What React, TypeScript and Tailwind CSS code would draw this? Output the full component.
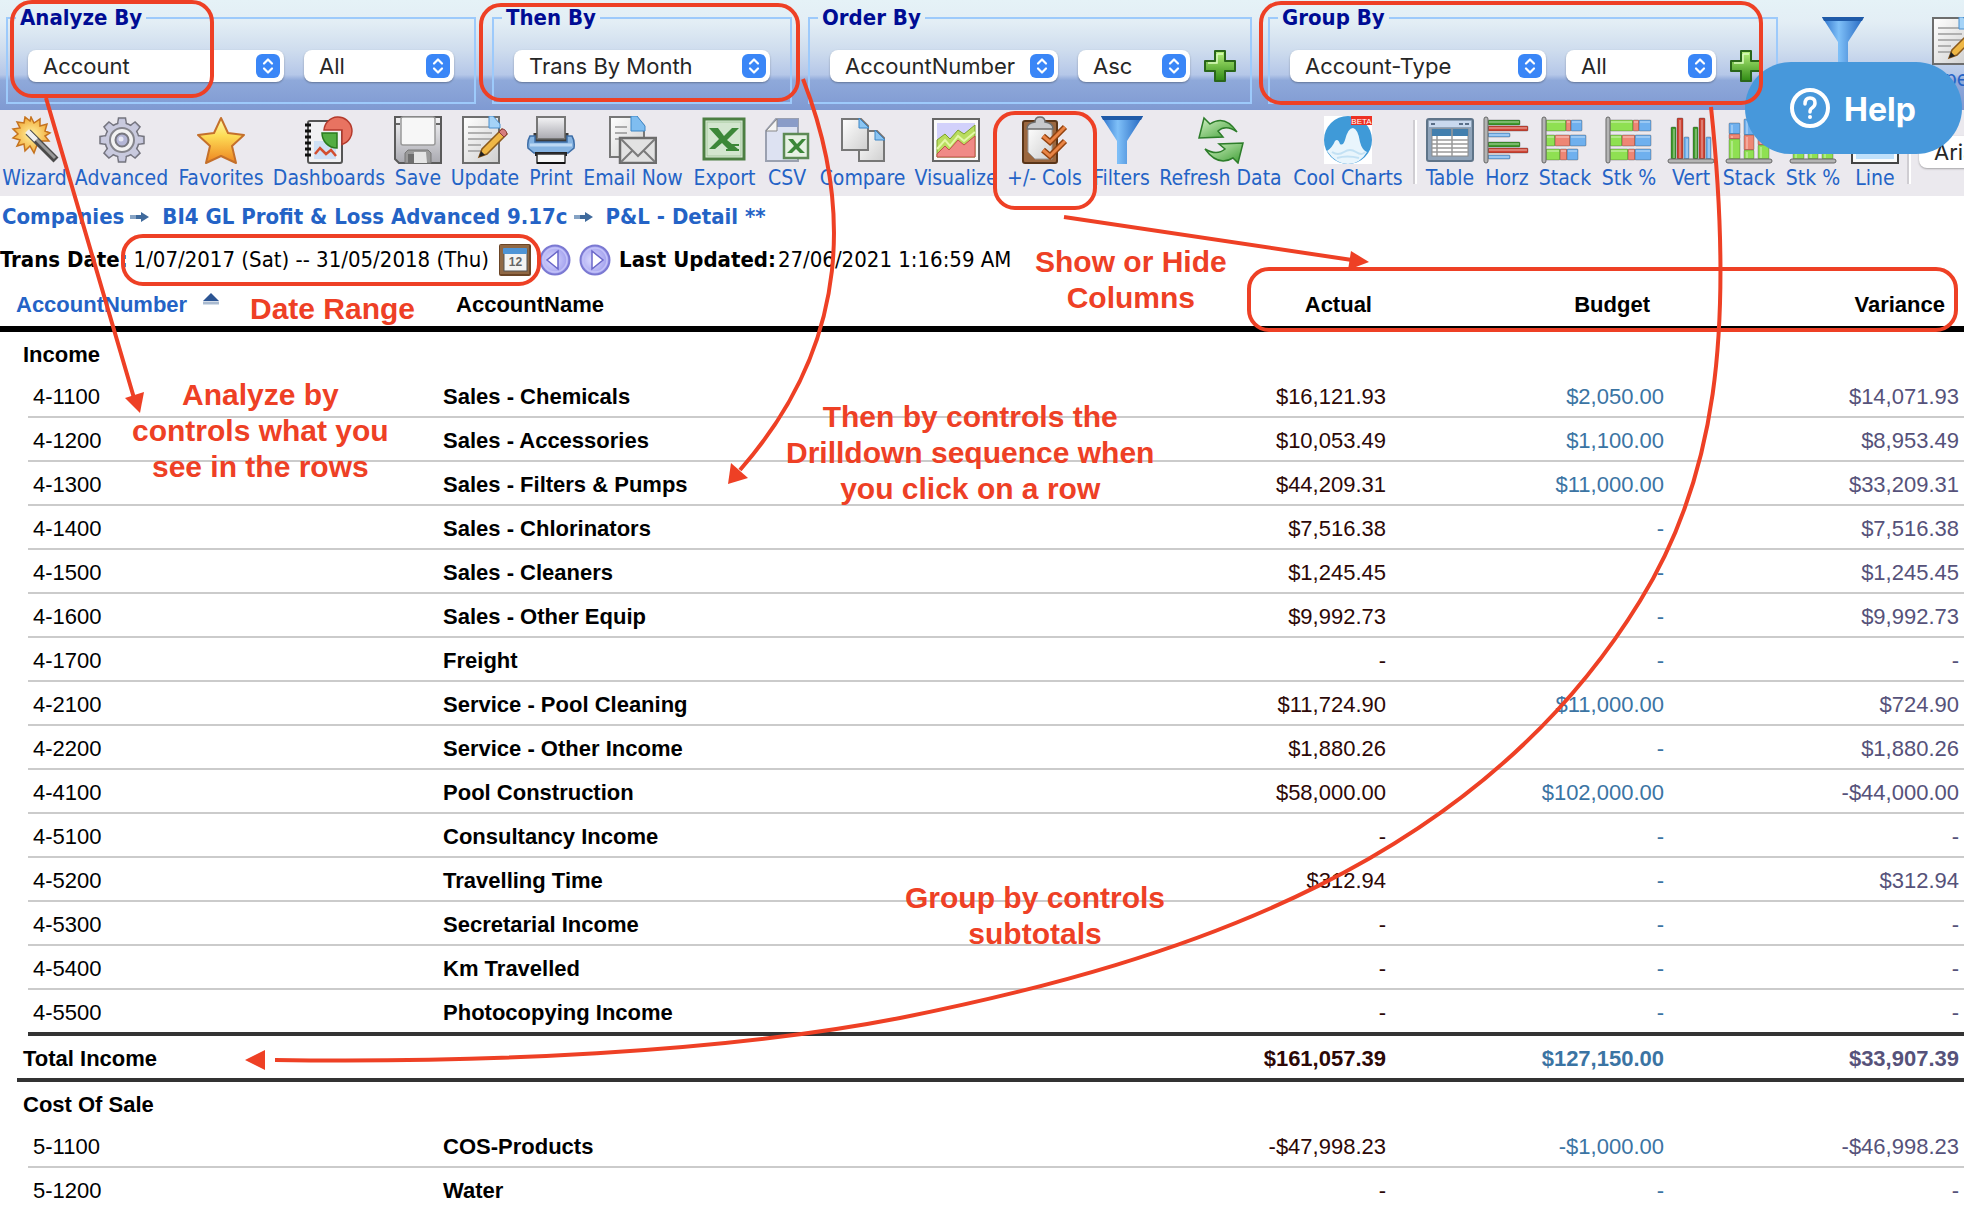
import React from "react";

const tahoma = "font-['DejaVu_Sans_Condensed','Noto_Sans',sans-serif]";

/* ---------- icons ---------- */

function Gradients() {
  return (
    <svg className="absolute size-0" aria-hidden="true">
      <defs>
        <linearGradient id="gold" x1="0" y1="0" x2="0" y2="1">
          <stop offset="0" stopColor="#fffbb0" />
          <stop offset="0.4" stopColor="#fddc55" />
          <stop offset="1" stopColor="#ee8420" />
        </linearGradient>
        <radialGradient id="burst">
          <stop offset="0" stopColor="#fff3a0" />
          <stop offset="1" stopColor="#f2ac3c" />
        </radialGradient>
        <linearGradient id="steel" x1="0" y1="0" x2="0" y2="1">
          <stop offset="0" stopColor="#f4f4f6" />
          <stop offset="1" stopColor="#a9a9b0" />
        </linearGradient>
        <linearGradient id="paper" x1="0" y1="0" x2="1" y2="1">
          <stop offset="0" stopColor="#ffffff" />
          <stop offset="1" stopColor="#cfcfcf" />
        </linearGradient>
        <linearGradient id="plus" x1="0" y1="0" x2="0" y2="1">
          <stop offset="0" stopColor="#b6f07c" />
          <stop offset="1" stopColor="#2f8a14" />
        </linearGradient>
        <linearGradient id="funnel" x1="0" y1="0" x2="1" y2="0">
          <stop offset="0" stopColor="#2a6fc9" />
          <stop offset="0.4" stopColor="#7fc0f8" />
          <stop offset="1" stopColor="#2265bf" />
        </linearGradient>
        <linearGradient id="leaf" x1="0" y1="0" x2="1" y2="1">
          <stop offset="0" stopColor="#d4f2c6" />
          <stop offset="1" stopColor="#3d9e33" />
        </linearGradient>
        <radialGradient id="orb" cx="0.4" cy="0.5" r="0.6">
          <stop offset="0" stopColor="#dcdcff" />
          <stop offset="1" stopColor="#9a98ec" />
        </radialGradient>
      </defs>
    </svg>
  );
}

function Icon({ children }: { children: React.ReactNode }) {
  return (
    <svg className="size-12 shrink-0" viewBox="0 0 48 48" aria-hidden="true">
      {children}
    </svg>
  );
}

function WizardIcon() {
  return (
    <Icon>
      <path
        d="M20 1l3 6 6-4 0 7 7-2-2 7 5 2-5 3 4 5-7 0 1 7-6-3-3 8-4-7-5 5-1-7-7 2 3-6-7-2 5-4-5-5 7-1-3-6 7 1 1-6 5 4z"
        fill="url(#burst)"
        stroke="#c5731f"
        strokeWidth="1.5"
      />
      <path d="M17 16l28 28" stroke="#4a4a4a" strokeWidth="7" />
      <path d="M17 15l27 27" stroke="#999" strokeWidth="3" />
      <path d="M16 15l9 9" stroke="#f0f0f0" strokeWidth="5" />
    </Icon>
  );
}

const teeth = [0, 45, 90, 135, 180, 225, 270, 315];

function GearIcon() {
  return (
    <Icon>
      {teeth.map((a) => (
        <path key={a} d="M19.500 9l1-7h7l1 7z" fill="#c3c4dc" stroke="#74747e" strokeWidth="1.500" transform={`rotate(${a} 24 24)`} />
      ))}
      <circle cx="24" cy="24" r="17" fill="#c9cade" stroke="#74747e" strokeWidth="1.500" />
      {teeth.map((a) => (
        <path key={a} d="M20 11l1-7h6l1 7z" fill="#c9cade" transform={`rotate(${a} 24 24)`} />
      ))}
      <circle cx="24" cy="24" r="12" fill="#f2f2f2" stroke="#85858c" strokeWidth="2" />
      <circle cx="24" cy="24" r="6.500" fill="#b4b6d6" stroke="#77777f" strokeWidth="2" />
      <circle cx="23" cy="23" r="2.500" fill="#e6e7f4" />
    </Icon>
  );
}

function StarIcon() {
  return (
    <Icon>
      <path
        d="M24 2l7 15 16 2-12 11 4 17-15-7-15 7 4-17L1 19l16-2z"
        fill="url(#gold)"
        stroke="#c4702b"
        strokeWidth="2"
        strokeLinejoin="round"
      />
    </Icon>
  );
}

function DashboardIcon() {
  return (
    <Icon>
      <rect x="3" y="5" width="34" height="42" rx="2" fill="#f1f1f3" stroke="#555" strokeWidth="2" />
      <rect x="9" y="25" width="22" height="18" fill="#cfe0f5" />
      <path d="M10 38l5-6 6 6 5-4 5 6" fill="none" stroke="#d34e2f" strokeWidth="2.500" />
      {[9, 15, 21, 27, 33, 39].map((y) => (
        <path key={y} d={`M0 ${y}h6`} stroke="#111" strokeWidth="3" />
      ))}
      <path d="M19 14a14 14 0 1 1 18 14.500V14z" fill="#e87361" stroke="#b43a2c" strokeWidth="1.500" />
      <path d="M17 17h15v15a15 15 0 0 1-15-15z" fill="#54ad42" stroke="#2b7a1e" strokeWidth="1.500" />
    </Icon>
  );
}

function SaveIcon() {
  return (
    <Icon>
      <path d="M1 1h46v46H5l-4-4z" fill="url(#steel)" stroke="#5a5a5a" strokeWidth="2" />
      <rect x="7" y="1" width="34" height="28" rx="2" fill="#f7f7f7" stroke="#999" strokeWidth="1.500" />
      <path d="M2 8h4M42 8h4" stroke="#666" strokeWidth="2" />
      <path d="M11 47V37l3-3h20l3 3v10z" fill="#9a9a9a" stroke="#777" />
      <path d="M19 47l1-11h12l1 11z" fill="#e5e5e5" />
      <rect x="14" y="38" width="6" height="9" fill="#6f6f6f" />
    </Icon>
  );
}

function NoteIcon() {
  return (
    <Icon>
      <rect x="2" y="1" width="36" height="46" fill="url(#paper)" stroke="#6d6d6d" strokeWidth="2" />
      {[11, 17, 23, 29, 35].map((y, i) => (
        <path key={y} d={`M7 ${y}h${i > 2 ? 13 : 24}`} stroke="#b0b0b0" strokeWidth="2" />
      ))}
      <path d="M28 0h4l7 8v4H28z" fill="#a5d3f7" stroke="#4a90cf" strokeWidth="1" />
      <path d="M18 41l3-8 20-20 5 5-20 20z" fill="#efb745" stroke="#8b5a1c" strokeWidth="1.500" />
      <path d="M38 16l3-3q4 0 5 5l-3 3z" fill="#d67d7d" stroke="#8c3a3a" strokeWidth="1" />
      <path d="M18 41l2-6 4 4z" fill="#222" />
    </Icon>
  );
}

function PrintIcon() {
  return (
    <Icon>
      <path d="M10 1h28v22H10z" fill="url(#steel)" stroke="#777" strokeWidth="2" />
      <path d="M8 17v8h32v-8" fill="none" stroke="#3c3c3c" strokeWidth="3" />
      <path d="M3 20h5v6h32v-6h5q3 5 2 12l-6 5H7l-6-5q-1-7 2-12z" fill="#86b4e2" stroke="#3f6fa8" strokeWidth="1.500" />
      <path d="M3 29h42" stroke="#bcd8f3" strokeWidth="3" />
      <path d="M8 36h32v4H8z" fill="#222" />
      <path d="M10 38h28v9H10z" fill="#f6f6f6" stroke="#333" strokeWidth="1.500" />
      <path d="M10 47h28" stroke="#111" strokeWidth="2" />
    </Icon>
  );
}

function EmailIcon() {
  return (
    <Icon>
      <path d="M1 1h26l8 9v31H1z" fill="url(#paper)" stroke="#777" strokeWidth="2" />
      <path d="M6 11h12M6 17h12M6 23h8" stroke="#aaa" strokeWidth="2" />
      <path d="M22 0h6l8 10v5H22z" fill="#7fbdf0" stroke="#3d86c6" />
      <rect x="11" y="22" width="36" height="25" fill="#e2e2e2" stroke="#6c6c6c" strokeWidth="2.500" />
      <path d="M12 23l17 17 17-17M12 46l12-12M46 46L34 34" fill="none" stroke="#7b7b7b" strokeWidth="2" />
    </Icon>
  );
}

function ExportIcon() {
  return (
    <Icon>
      <rect x="3" y="3" width="40" height="40" fill="#dfeedd" stroke="#4c7f42" strokeWidth="3" />
      <rect x="6" y="6" width="34" height="34" fill="#d3e6cf" stroke="#a7c9a0" />
      <path d="M8 12h9l6 8 8-8h7L26 24l11 9H27l-6-6-7 6H8l10-10z" fill="#3c8738" />
      <path d="M25 34h13M31 29h7" stroke="#3c8738" strokeWidth="2" />
    </Icon>
  );
}

function CsvIcon() {
  return (
    <Icon>
      <path d="M3 15L13 3h22v42H3z" fill="#dde2f2" stroke="#9aa0b0" strokeWidth="2" />
      <path d="M14 3h21v8H14z" fill="#8a9cc8" />
      <path d="M3 15l11-12v12z" fill="#f4f4f4" stroke="#888" />
      <rect x="21" y="18" width="24" height="24" fill="#e6f1e3" stroke="#5c8a54" strokeWidth="2.500" />
      <path d="M25 23h5l4 5 5-5h4l-7 8 6 6h-5l-4-4-4 4h-5l7-7z" fill="#3c8738" />
    </Icon>
  );
}

function CompareIcon() {
  return (
    <Icon>
      <path d="M20 15h18l7 7v23H20z" fill="url(#paper)" stroke="#777" strokeWidth="2" />
      <path d="M36 14l10 10H36z" fill="#8cc6f3" stroke="#3d86c6" />
      <path d="M3 3h19l7 7v24H3z" fill="url(#paper)" stroke="#777" strokeWidth="2" />
      <path d="M20 2l10 10H20z" fill="#8cc6f3" stroke="#3d86c6" />
    </Icon>
  );
}

function VisualizeIcon() {
  return (
    <Icon>
      <rect x="1" y="3" width="46" height="42" fill="#fafafa" stroke="#666" strokeWidth="2" />
      <rect x="5" y="7" width="38" height="34" fill="#d2d1fb" />
      <path d="M5 24l8-6 5 5 8-9 6 4 11-9v32H5z" fill="#b9dd5f" stroke="#7da22a" />
      <path d="M5 38l8-8 4 4 9-10 6 5 11-9v21H5z" fill="#f08a86" stroke="#c0504a" />
      <path d="M5 33l8-9 5 6 8-10 6 5 11-9" fill="none" stroke="#e4f7a8" strokeWidth="2" />
    </Icon>
  );
}

function ColsIcon() {
  return (
    <Icon>
      <rect x="2" y="5" width="34" height="42" rx="2" fill="#9b673f" stroke="#5a3518" strokeWidth="2" />
      <path d="M7 10h24v33H14l-7-7z" fill="url(#paper)" stroke="#999" />
      <path d="M6 13q0-6 8-7 0-5 5-5t5 5q8 1 8 7z" fill="#c6c8cc" stroke="#6d6d6d" strokeWidth="1.500" />
      <path d="M22 20l7 6 15-15M22 34l7 6 15-15" fill="none" stroke="#92420f" strokeWidth="6" />
      <path d="M22 20l7 6 15-15M22 34l7 6 15-15" fill="none" stroke="#e98445" strokeWidth="3" />
    </Icon>
  );
}

function FunnelIcon() {
  return (
    <Icon>
      <path d="M3 0h42L29 25v23H19V25z" fill="url(#funnel)" />
      <path d="M3 0h42l-2 4H5z" fill="#1f5aa8" />
    </Icon>
  );
}

function RefreshIcon() {
  return (
    <Icon>
      <path d="M2 22L7 2l6 6q15-10 27 8-11-8-19-1l5 6z" fill="url(#leaf)" stroke="#2d7d2a" strokeWidth="1.500" />
      <path d="M46 27l-5 20-5-5q-15 9-28-9 12 7 20 0l-6-5z" fill="url(#leaf)" stroke="#2d7d2a" strokeWidth="1.500" />
    </Icon>
  );
}

function CoolIcon() {
  return (
    <Icon>
      <rect width="48" height="48" fill="#fff" />
      <circle cx="24" cy="24" r="24" fill="#3f9ad8" />
      <path d="M3 35q5-3 8-10 3-3 5 3 3 2 5-4 3-12 8-12 5 1 7 14 2 8 7 10-7 12-19 12T3 35z" fill="#e9f5fc" />
      <path d="M8 36q6 4 12 0t12 0 9 0M13 42q10-3 22 0" fill="none" stroke="#c3e1f4" strokeWidth="2" />
      <rect x="27" width="21" height="9" fill="#ee3124" />
      <text x="37.500" y="7.500" textAnchor="middle" fontSize="8" fill="#fff" fontFamily="Liberation Sans, sans-serif">
        BETA
      </text>
    </Icon>
  );
}

function TableIcon() {
  return (
    <Icon>
      <rect x="1" y="3" width="46" height="42" rx="2" fill="#90a4ba" stroke="#5f7489" strokeWidth="2" />
      <rect x="3" y="5" width="42" height="6" fill="#c9d9ee" />
      <path d="M5 8h4M33 8h4M39 8h4" stroke="#5a6f88" strokeWidth="2" />
      <rect x="6" y="13" width="36" height="27" fill="#fff" stroke="#888" />
      <rect x="6" y="13" width="36" height="7" fill="#427fae" />
      <path d="M6 24h36M6 28h36M6 32h36M6 36h36M11 20v20M26 13v27" stroke="#9a9a9a" strokeWidth="1.500" />
    </Icon>
  );
}

function LineIcon() {
  return (
    <Icon>
      <rect x="1" y="3" width="46" height="44" fill="#fafafa" stroke="#444" strokeWidth="2" />
      <rect x="5" y="7" width="38" height="36" fill="#bfe0fb" />
      <path d="M5 34l9-8 8 8 10-12 11 8" fill="none" stroke="#4a97d8" strokeWidth="3" />
    </Icon>
  );
}

const GREEN = "#8fe052";
const DARK_GREEN = "#3f9a2c";
const RED = "#ee8674";
const DARK_RED = "#cf4636";
const BLUE = "#6fb0ee";

type Bar = [number, number, number, number, string];

const horzBars: Bar[] = [
  [5, 4, 32, 5, DARK_GREEN],
  [5, 10, 40, 5, DARK_RED],
  [5, 17, 22, 4, BLUE],
  [5, 26, 32, 5, DARK_GREEN],
  [5, 32, 40, 5, DARK_RED],
  [5, 39, 22, 4, BLUE],
];
const stackBars: Bar[] = [
  [5, 4, 20, 11, GREEN], [25, 4, 5, 11, RED], [30, 4, 11, 11, BLUE],
  [5, 19, 9, 11, GREEN], [14, 19, 15, 11, RED], [29, 19, 16, 11, BLUE],
  [5, 33, 14, 11, GREEN], [19, 33, 7, 11, RED], [26, 33, 11, 11, BLUE],
];
const stackPctBars: Bar[] = [
  [5, 4, 23, 11, GREEN], [28, 4, 6, 11, RED], [34, 4, 12, 11, BLUE],
  [5, 19, 12, 11, GREEN], [17, 19, 13, 11, RED], [30, 19, 16, 11, BLUE],
  [5, 33, 18, 11, GREEN], [23, 33, 7, 11, RED], [30, 33, 16, 11, BLUE],
];
const vertBars: Bar[] = [
  [4, 11, 5, 32, DARK_GREEN], [10, 2, 6, 41, DARK_RED], [17, 21, 5, 22, BLUE],
  [26, 11, 5, 32, DARK_GREEN], [32, 2, 6, 41, DARK_RED], [39, 21, 5, 22, BLUE],
];
const vstackBars: Bar[] = [
  [4, 7, 11, 11, BLUE], [4, 18, 11, 5, RED], [4, 23, 11, 20, GREEN],
  [19, 3, 10, 16, BLUE], [19, 19, 10, 15, RED], [19, 34, 10, 9, GREEN],
  [33, 12, 11, 10, BLUE], [33, 22, 11, 7, RED], [33, 29, 11, 14, GREEN],
];

function BarsIcon({ bars, vertical }: { bars: Bar[]; vertical?: boolean }) {
  return (
    <Icon>
      {bars.map(([x, y, w, h, color]) => (
        <g key={`${x}-${y}`}>
          <rect x={x} y={y} width={w} height={h} rx="1" fill={color} stroke="#000" strokeOpacity="0.25" />
          {vertical ? (
            <rect x={x + 2} y={y + 2} width="2" height={h - 3} fill="#fff" fillOpacity="0.3" />
          ) : (
            <rect x={x + 1} y={y + 1} width={w - 2} height="2" fill="#fff" fillOpacity="0.3" />
          )}
        </g>
      ))}
      {vertical ? (
        <rect x="1" y="43" width="46" height="4" rx="2" fill="#b4b4b4" stroke="#666" />
      ) : (
        <rect x="1" y="1" width="4" height="46" rx="2" fill="#b4b4b4" stroke="#666" />
      )}
    </Icon>
  );
}

function PlusIcon() {
  return (
    <svg className="size-8" viewBox="0 0 32 32" aria-hidden="true">
      <path d="M11 1h10v10h10v10H21v10H11V21H1V11h10z" fill="url(#plus)" stroke="#2a661a" strokeWidth="2" strokeLinejoin="round" />
      <path d="M13 4h6M4 13h9V4" fill="none" stroke="#dcfbbf" strokeWidth="1.500" />
    </svg>
  );
}

function CrumbArrow() {
  return (
    <svg className="mx-1.5 h-3 w-5 shrink-0" viewBox="0 0 20 12" aria-hidden="true">
      <path d="M0 4h11V1l8 5-8 5V8H0z" fill="#3f6a9c" />
      <path d="M0 4h6v4H0z" fill="#86a3c4" />
    </svg>
  );
}

function StepIcon({ back }: { back?: boolean }) {
  return (
    <svg className="size-8" viewBox="0 0 32 32" aria-hidden="true">
      <circle cx="16" cy="16" r="14.500" fill="url(#orb)" stroke="#7b79d2" strokeWidth="2" />
      <circle cx="16" cy="16" r="12" fill="none" stroke="#c3c2f8" strokeWidth="1.500" />
      <path d={back ? "M19 7v18L8 16z" : "M13 7v18l11-9z"} fill="#fff" stroke="#6a67c9" strokeWidth="1.500" />
    </svg>
  );
}

function CalendarIcon() {
  return (
    <svg className="size-8" viewBox="0 0 32 32" aria-hidden="true">
      <rect width="32" height="32" rx="2" fill="#6b4526" />
      <rect x="1" y="1" width="29" height="29" fill="#8f6845" />
      <rect x="5" y="6" width="23" height="21" fill="#f3f3f3" stroke="#555" />
      <rect x="4" y="4" width="24" height="6" rx="1" fill="#4e94d6" />
      <text x="16.500" y="22" textAnchor="middle" fontSize="12" fontWeight="bold" fill="#666" fontFamily="Liberation Sans, sans-serif">
        12
      </text>
    </svg>
  );
}

/* ---------- criteria bar ---------- */

function Select({ label, value, width }: { label: string; value: string; width: string }) {
  return (
    <span className={`relative block shrink-0 ${width}`}>
      <select
        aria-label={label}
        defaultValue={value}
        className="block h-8 w-full appearance-none rounded-lg bg-white pr-8 pl-[15px] font-['Inter',sans-serif] text-[22px] leading-8 text-[#262626] shadow-[0_1px_2px_rgba(0,0,0,0.3)]"
      >
        <option>{value}</option>
      </select>
      <svg className="pointer-events-none absolute top-1 right-1 size-6" viewBox="0 0 24 24" aria-hidden="true">
        <rect width="24" height="24" rx="6" fill="#3a86f7" />
        <path d="M8 9.500l4-4 4 4M8 14.500l4 4 4-4" fill="none" stroke="#fff" strokeWidth="2.200" strokeLinecap="round" strokeLinejoin="round" />
      </svg>
    </span>
  );
}

function Criteria({ title, className, children }: { title: string; className: string; children: React.ReactNode }) {
  return (
    <fieldset className={`h-[104px] shrink-0 border-2 border-[#9dcafb] pl-5 ${className}`}>
      <legend className={`-ml-3 px-1 text-[22px] leading-9 font-bold text-[#000c94] ${tahoma}`}>{title}</legend>
      <div className="flex items-center pt-3.5">{children}</div>
    </fieldset>
  );
}

function AddButton({ label }: { label: string }) {
  return (
    <button type="button" aria-label={label} className="ml-3.5 shrink-0">
      <PlusIcon />
    </button>
  );
}

function CriteriaBar() {
  return (
    <header className="flex h-[110px] items-start gap-4 overflow-hidden bg-[linear-gradient(180deg,#e5f2f7_0%,#e3eef5_20%,#cfddee_45%,#b5c7e8_68%,#8fa9da_73%,#7f9ad2_100%)] pl-1.5">
      <Criteria title="Analyze By" className="w-[470px]">
        <Select label="Analyze by" value="Account" width="w-[256px]" />
        <span className="w-5" />
        <Select label="Analyze by filter" value="All" width="w-[150px]" />
      </Criteria>
      <Criteria title="Then By" className="w-[300px]">
        <Select label="Then by" value="Trans By Month" width="w-[256px]" />
      </Criteria>
      <Criteria title="Order By" className="w-[444px]">
        <Select label="Order by" value="AccountNumber" width="w-[228px]" />
        <span className="w-5" />
        <Select label="Order direction" value="Asc" width="w-[112px]" />
        <AddButton label="Add order" />
      </Criteria>
      <Criteria title="Group By" className="w-[510px]">
        <Select label="Group by" value="Account-Type" width="w-[256px]" />
        <span className="w-5" />
        <Select label="Group by filter" value="All" width="w-[150px]" />
        <AddButton label="Add group" />
      </Criteria>
      <button type="button" aria-label="Filter" className="mt-[17px] ml-[25px] shrink-0">
        <FunnelIcon />
      </button>
      <button type="button" className={`mt-[17px] ml-12 flex w-12 shrink-0 flex-col items-center text-[21px] leading-7 text-[#2463c6] ${tahoma}`}>
        <NoteIcon />
        Open
      </button>
    </header>
  );
}

/* ---------- toolbar ---------- */

const actions = [
  { label: "Wizard", width: "w-[69px]", icon: <WizardIcon /> },
  { label: "Advanced", width: "w-[105px]", icon: <GearIcon /> },
  { label: "Favorites", width: "w-[94px]", icon: <StarIcon /> },
  { label: "Dashboards", width: "w-[122px]", icon: <DashboardIcon /> },
  { label: "Save", width: "w-[56px]", icon: <SaveIcon /> },
  { label: "Update", width: "w-[78px]", icon: <NoteIcon /> },
  { label: "Print", width: "w-[54px]", icon: <PrintIcon /> },
  { label: "Email Now", width: "w-[110px]", icon: <EmailIcon /> },
  { label: "Export", width: "w-[73px]", icon: <ExportIcon /> },
  { label: "CSV", width: "w-[52px]", icon: <CsvIcon /> },
  { label: "Compare", width: "w-[99px]", icon: <CompareIcon /> },
  { label: "Visualize", width: "w-[88px]", icon: <VisualizeIcon /> },
  { label: "+/- Cols", width: "w-[89px]", icon: <ColsIcon /> },
  { label: "Filters", width: "w-[65px]", icon: <FunnelIcon /> },
  { label: "Refresh Data", width: "w-[133px]", icon: <RefreshIcon /> },
  { label: "Cool Charts", width: "w-[122px]", icon: <CoolIcon /> },
];

const charts = [
  { label: "Table", width: "w-[58px]", icon: <TableIcon /> },
  { label: "Horz", width: "w-[56px]", icon: <BarsIcon bars={horzBars} /> },
  { label: "Stack", width: "w-[60px]", icon: <BarsIcon bars={stackBars} /> },
  { label: "Stk %", width: "w-[68px]", icon: <BarsIcon bars={stackPctBars} /> },
  { label: "Vert", width: "w-[56px]", icon: <BarsIcon bars={vertBars} vertical /> },
  { label: "Stack", width: "w-[60px]", icon: <BarsIcon bars={vstackBars} vertical /> },
  { label: "Stk %", width: "w-[68px]", icon: <BarsIcon bars={vstackBars} vertical /> },
  { label: "Line", width: "w-[56px]", icon: <LineIcon /> },
];

function Tool({ label, width, icon }: { label: string; width: string; icon: React.ReactNode }) {
  return (
    <button type="button" className={`flex shrink-0 flex-col items-center leading-7 whitespace-nowrap ${width}`}>
      {icon}
      <span>{label}</span>
    </button>
  );
}

function Toolbar() {
  return (
    <nav className={`flex h-[86px] items-start overflow-hidden bg-[#ebe9ee] pt-1.5 text-[21px] text-[#2463c6] ${tahoma}`}>
      {actions.map((tool) => (
        <Tool key={tool.label} {...tool} />
      ))}
      <span className="mt-1 ml-1 h-16 w-1 shrink-0 border-r-2 border-l-2 border-l-[#cfcdd2] border-r-white" />
      <span className="w-1 shrink-0" />
      {charts.map((tool, i) => (
        <Tool key={i} {...tool} />
      ))}
      <span className="mt-1 ml-1 h-16 w-1 shrink-0 border-r-2 border-l-2 border-l-[#cfcdd2] border-r-white" />
      <span className="mt-5 ml-2">
        <Select label="Font" value="Arial" width="w-[140px]" />
      </span>
    </nav>
  );
}

/* ---------- report ---------- */

type Row = [string, string, string, string, string];

const income: Row[] = [
  ["4-1100", "Sales - Chemicals", "$16,121.93", "$2,050.00", "$14,071.93"],
  ["4-1200", "Sales - Accessories", "$10,053.49", "$1,100.00", "$8,953.49"],
  ["4-1300", "Sales - Filters & Pumps", "$44,209.31", "$11,000.00", "$33,209.31"],
  ["4-1400", "Sales - Chlorinators", "$7,516.38", "-", "$7,516.38"],
  ["4-1500", "Sales - Cleaners", "$1,245.45", "-", "$1,245.45"],
  ["4-1600", "Sales - Other Equip", "$9,992.73", "-", "$9,992.73"],
  ["4-1700", "Freight", "-", "-", "-"],
  ["4-2100", "Service - Pool Cleaning", "$11,724.90", "$11,000.00", "$724.90"],
  ["4-2200", "Service - Other Income", "$1,880.26", "-", "$1,880.26"],
  ["4-4100", "Pool Construction", "$58,000.00", "$102,000.00", "-$44,000.00"],
  ["4-5100", "Consultancy Income", "-", "-", "-"],
  ["4-5200", "Travelling Time", "$312.94", "-", "$312.94"],
  ["4-5300", "Secretarial Income", "-", "-", "-"],
  ["4-5400", "Km Travelled", "-", "-", "-"],
  ["4-5500", "Photocopying Income", "-", "-", "-"],
];

const costOfSale: Row[] = [
  ["5-1100", "COS-Products", "-$47,998.23", "-$1,000.00", "-$46,998.23"],
  ["5-1200", "Water", "-", "-", "-"],
];

function GroupRow({ title }: { title: string }) {
  return (
    <tr className="h-[42px]">
      <td />
      <th colSpan={6} scope="rowgroup" className="pt-1 pl-1.5 text-left font-bold">
        {title}
      </th>
    </tr>
  );
}

function DataRow({ row, last }: { row: Row; last?: boolean }) {
  const [code, name, actual, budget, variance] = row;
  const cell = last ? "border-b-4 border-[#333] px-[5px] pt-1" : "border-b-2 border-[#cbcbcb] px-[5px] pt-1";
  return (
    <tr className={last ? "h-[46px]" : "h-11"}>
      <td />
      <td />
      <td className={cell}>{code}</td>
      <td className={`${cell} font-bold`}>{name}</td>
      <td className={`${cell} text-right text-[#2d0806]`}>{actual}</td>
      <td className={`${cell} text-right text-[#3b74a3]`}>{budget}</td>
      <td className={`${cell} text-right text-[#56527a]`}>{variance}</td>
    </tr>
  );
}

function Report() {
  const head = "border-b-6 border-black pr-[19px] text-right font-bold";
  const total = "border-b-4 border-[#333] px-[5px] pt-1 text-right";
  return (
    <table className="w-full table-fixed border-separate border-spacing-0 font-['Liberation_Sans',Arial,sans-serif] text-[22px] leading-7 text-black">
      <colgroup>
        <col className="w-[17px]" />
        <col className="w-[11px]" />
        <col className="w-[410px]" />
        <col />
        <col className="w-[250px]" />
        <col className="w-[278px]" />
        <col className="w-[295px]" />
      </colgroup>
      <thead>
        <tr className="h-12">
          <th colSpan={3} className="border-b-6 border-black pl-4 text-left font-bold">
            <a href="#sort" className="inline-flex items-start gap-4 text-[#2463c6]">
              AccountNumber
              <svg className="mt-0.5 h-3 w-4" viewBox="0 0 16 12" aria-hidden="true">
                <path d="M8 0l8 8H0z" fill="#2c5593" />
                <path d="M0 10h16" stroke="#a9bad0" strokeWidth="3" />
              </svg>
            </a>
          </th>
          <th className="border-b-6 border-black pl-[18px] text-left font-bold">AccountName</th>
          <th className={head}>Actual</th>
          <th className={head}>Budget</th>
          <th className={head}>Variance</th>
        </tr>
      </thead>
      <tbody>
        <GroupRow title="Income" />
        {income.map((row, i) => (
          <DataRow key={row[0]} row={row} last={i === income.length - 1} />
        ))}
        <tr className="h-[46px] font-bold">
          <td />
          <th colSpan={3} scope="row" className="border-b-4 border-[#333] pt-1 pl-1.5 text-left">
            Total Income
          </th>
          <td className={`${total} text-[#2d0806]`}>$161,057.39</td>
          <td className={`${total} text-[#3b74a3]`}>$127,150.00</td>
          <td className={`${total} text-[#56527a]`}>$33,907.39</td>
        </tr>
        <GroupRow title="Cost Of Sale" />
        {costOfSale.map((row) => (
          <DataRow key={row[0]} row={row} />
        ))}
      </tbody>
    </table>
  );
}

/* ---------- callouts drawn over the report ---------- */

function Callouts() {
  const note = "absolute text-center font-['Liberation_Sans',Arial,sans-serif] text-[30px] leading-9 font-bold whitespace-nowrap text-[#ee4025]";
  return (
    <div className="pointer-events-none absolute inset-0 overflow-hidden">
      <svg className="absolute top-0 left-0 h-[1210px] w-[1964px]" viewBox="0 0 1964 1210" fill="none" stroke="#ee4025" strokeWidth="4" aria-hidden="true">
        <rect x="12" y="2" width="200" height="94" rx="20" />
        <rect x="481" y="5" width="317" height="95" rx="20" />
        <rect x="995" y="113" width="100" height="95" rx="20" />
        <rect x="1261" y="3" width="500" height="100" rx="20" />
        <rect x="123" y="236" width="416" height="48" rx="20" />
        <rect x="1249" y="269" width="707" height="61" rx="20" />
        <path d="M46 98L134 398M1064 217L1352 260" />
        <path d="M803 79C850 200 854 340 740 470" />
        <path d="M1711 107C1735 335 1715 480 1640 601C1480 862 1190 960 900 1018C720 1053 480 1063 275 1060" />
        <g fill="#ee4025" stroke="none">
          <path d="M140 413L125 398L144 392z" />
          <path d="M1369 262L1351 251L1348 270z" />
          <path d="M728 484L731 463L748 478z" />
          <path d="M245 1060L265 1050V1070z" />
        </g>
      </svg>
      <p className={`${note} top-[244px] left-[1035px]`}>Show or Hide<br />Columns</p>
      <p className={`${note} top-[291px] left-[250px]`}>Date Range</p>
      <p className={`${note} top-[377px] left-[132px]`}>Analyze by<br />controls what you<br />see in the rows</p>
      <p className={`${note} top-[399px] left-[786px]`}>Then by controls the<br />Drilldown sequence when<br />you click on a row</p>
      <p className={`${note} top-[880px] left-[905px]`}>Group by controls<br />subtotals</p>
    </div>
  );
}

function HelpButton() {
  return (
    <button
      type="button"
      className="absolute top-[62px] left-[1745px] flex h-[92px] w-[217px] items-center gap-3 rounded-full bg-[#4798db] pt-1 pl-[43px] font-['Inter',sans-serif] text-[32px] leading-10 font-bold text-white"
    >
      <svg className="size-11 shrink-0" viewBox="0 0 44 44" fill="none" stroke="#fff" aria-hidden="true">
        <circle cx="22" cy="20" r="18" strokeWidth="4" />
        <path d="M17 16q0-6 5-6t5 5q0 3-3 5-2 1-2 4" strokeWidth="3.500" strokeLinecap="round" />
        <circle cx="22" cy="29" r="2" fill="#fff" stroke="none" />
      </svg>
      Help
    </button>
  );
}

export default function App() {
  return (
    <main className="relative min-h-screen overflow-hidden bg-white">
      <Gradients />
      <CriteriaBar />
      <Toolbar />
      <div className={`flex h-10 items-center pt-0.5 pl-0.5 text-[22px] leading-8 font-bold whitespace-nowrap text-[#2463c6] ${tahoma}`}>
        <a href="#companies">Companies</a>
        <CrumbArrow />
        <a href="#report" className="ml-1.5">BI4 GL Profit &amp; Loss Advanced 9.17c</a>
        <CrumbArrow />
        <a href="#detail" className="ml-1.5">P&amp;L - Detail **</a>
      </div>
      <div className={`flex h-12 items-center text-[22px] leading-8 whitespace-nowrap text-black ${tahoma}`}>
        <b>Trans Date:</b>
        <span className="ml-1.5">1/07/2017 (Sat) -- 31/05/2018 (Thu)</span>
        <button type="button" aria-label="Pick date range" className="ml-2.5">
          <CalendarIcon />
        </button>
        <button type="button" aria-label="Previous period" className="ml-2">
          <StepIcon back />
        </button>
        <button type="button" aria-label="Next period" className="ml-2">
          <StepIcon />
        </button>
        <b className="ml-2">Last Updated:</b>
        <span className="ml-0.5">27/06/2021 1:16:59 AM</span>
      </div>
      <Report />
      <HelpButton />
      <Callouts />
    </main>
  );
}
